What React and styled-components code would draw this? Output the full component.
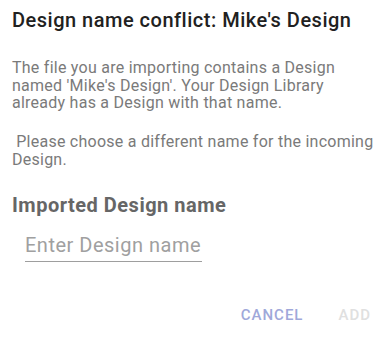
import styled, { createGlobalStyle } from "styled-components";

const GlobalStyle = createGlobalStyle`
  body {
    margin: 0;
    background: #ffffff;
    font-family: Roboto, "Noto Sans", sans-serif;
  }
`;

const App = () => {
  return (
    <>
      <GlobalStyle />
      <Dialog>
        <Title>Design name conflict: Mike's Design</Title>
        <Message>
          The file you are importing contains a Design named 'Mike's Design'.
          Your Design Library already has a Design with that name.
        </Message>
        <Message $gap={21.9}>
          &nbsp;Please choose a different name for the incoming Design.
        </Message>
        <Label>Imported Design name</Label>
        <Field placeholder="Enter Design name" />
        <Actions>
          <Button $color="#9fa8da">Cancel</Button>
          <Button $color="#e0e0e0">Add</Button>
        </Actions>
      </Dialog>
    </>
  );
};
export default App;

const Dialog = styled.div`
  width: 389px;
  height: 338px;
  box-sizing: border-box;
  padding: 8px 12px 0 12px;
  display: flex;
  flex-direction: column;
  align-items: flex-start;
`;

const Title = styled.div`
  font-size: 20px;
  font-weight: 500;
  line-height: 24px;
  letter-spacing: 0.5px;
  color: #212121;
`;

const Message = styled.p`
  margin: ${({ $gap }) => $gap || 27}px 0 0 0;
  font-size: 16px;
  line-height: 17.5px;
  letter-spacing: 0.25px;
  color: #7a7a7a;
`;

const Label = styled.div`
  margin-top: 24.7px;
  font-size: 20px;
  font-weight: 700;
  line-height: 24px;
  letter-spacing: 0.5px;
  color: #666666;
`;

const Field = styled.input`
  margin: 15.8px 0 0 13px;
  width: 177px;
  box-sizing: border-box;
  border: none;
  border-bottom: 1px solid #9e9e9e;
  padding: 0 0 4px 0;
  font-family: Roboto, "Noto Sans", sans-serif;
  font-size: 20px;
  line-height: 24px;
  letter-spacing: 0.5px;
  color: #424242;
  outline: none;
  background: transparent;

  &::placeholder {
    color: #a0a0a0;
  }
`;

const Actions = styled.div`
  align-self: stretch;
  display: flex;
  justify-content: flex-end;
  gap: 35px;
  margin-top: 43.8px;
  padding-right: 6px;
`;

const Button = styled.button`
  border: none;
  background: transparent;
  padding: 0;
  font-family: Roboto, "Noto Sans", sans-serif;
  font-size: 15px;
  font-weight: 500;
  line-height: 18px;
  letter-spacing: 1px;
  text-transform: uppercase;
  color: ${({ $color }) => $color};
`;
